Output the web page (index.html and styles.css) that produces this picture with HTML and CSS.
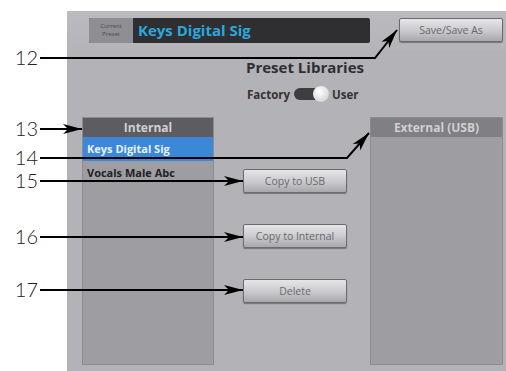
FILE: index.html
```html
<!DOCTYPE html>
<html lang="en">
<head>
  <meta charset="UTF-8">
  <title>Preset Libraries</title>
  <link rel="stylesheet" href="styles.css">
</head>
<body>
  <div class="panel">
    <div class="topbar">
      <div class="preset">
        <div class="preset-label">Current<br>Preset</div>
        <div class="preset-name">Keys Digital Sig</div>
      </div>
      <button class="btn save">Save/Save As</button>
    </div>

    <div class="libs-head">
      <h1>Preset Libraries</h1>
      <div class="switch-row">
        <span>Factory</span>
        <span class="toggle"><span class="knob"></span></span>
        <span>User</span>
      </div>
    </div>

    <div class="libs">
      <div class="list">
        <div class="list-head">Internal</div>
        <div class="item selected">Keys Digital Sig</div>
        <div class="item">Vocals Male Abc</div>
      </div>
      <div class="actions">
        <button class="btn">Copy to USB</button>
        <button class="btn">Copy to Internal</button>
        <button class="btn">Delete</button>
      </div>
      <div class="list">
        <div class="list-head ext">External (USB)</div>
      </div>
    </div>
  </div>

  <!-- callout lines -->
  <svg class="callouts" width="506" height="371" viewBox="0 0 506 371">
    <defs>
      <marker id="tip" markerUnits="userSpaceOnUse" markerWidth="20" markerHeight="12" refX="19" refY="6" orient="auto">
        <path d="M0,1 L19,6 L0,11 L5,6 z" fill="#000"/>
      </marker>
    </defs>
    <g class="lines">
      <polyline points="40,58 375,58 397,30" marker-end="url(#tip)"/>
      <polyline points="40,129 82,129" marker-end="url(#tip)"/>
      <polyline points="40,158 347,158 369,133" marker-end="url(#tip)"/>
      <polyline points="40,181 243,181" marker-end="url(#tip)"/>
      <polyline points="40,237 243,237" marker-end="url(#tip)"/>
      <polyline points="40,290 243,290" marker-end="url(#tip)"/>
    </g>
    <g class="nums">
      <text x="38" y="65">12</text>
      <text x="38" y="136">13</text>
      <text x="38" y="165">14</text>
      <text x="38" y="188">15</text>
      <text x="38" y="244">16</text>
      <text x="38" y="297">17</text>
    </g>
  </svg>
</body>
</html>
```

FILE: styles.css
```css
html, body { margin:0; padding:0; }
body { width:506px; height:371px; background:#fff; font-family:"Open Sans", "DejaVu Sans", sans-serif; overflow:hidden; position:relative; }

.panel { margin:11px 0 0 67px; height:360px; background:linear-gradient(#bbbabe, #b5b4b9 38px, #b3b2b7 40px, #b3b2b7); box-sizing:border-box; padding:7px 3px 0 22px; }

.topbar { display:flex; align-items:flex-start; }
.preset { display:flex; width:281px; height:25px; background:#2f2e31; border-radius:2px; overflow:hidden; }
.preset-label { width:44px; background:#8f8e93; color:#4a4a4e; font-size:6px; line-height:8px; text-align:center; padding-top:4px; box-sizing:border-box; }
.preset-name { color:#2aa8de; font-weight:700; font-size:15px; line-height:25px; padding-left:5px; }

.btn { display:block; width:104px; height:24px; padding:0; border:1px solid #6c6b70; border-radius:2px; background:linear-gradient(#e6e6e8, #c9c8cc 55%, #a9a8ad); color:#6a696e; font-family:"Open Sans", "DejaVu Sans", sans-serif; font-size:10.5px; box-shadow:0 1px 1px rgba(0,0,0,.35); }
.save { margin-left:auto; }

.libs-head { padding-left:152px; margin-top:14px; }
h1 { margin:0; width:128px; text-align:center; font-size:15px; font-weight:700; color:#2f2f33; line-height:20px; }
.switch-row { display:flex; align-items:center; gap:4px; height:16px; margin:9px 0 0 6px; font-size:11.5px; font-weight:700; color:#333; }
.toggle { position:relative; width:34px; height:12px; background:#3e3d41; border-radius:6px; }
.knob { position:absolute; right:-1px; top:-2px; width:16px; height:16px; border-radius:50%; background:radial-gradient(circle at 40% 35%, #fff, #d8d8da 70%, #a5a5a8); }

.libs { display:flex; margin:15px 0 0 -7px; }
.list { width:132px; height:248px; background:#9e9da2; border:1px solid #8c8b90; box-sizing:border-box; }
.list:last-child { width:133px; margin-left:auto; }
.list-head { height:19px; background:#5d5c60; color:#d0d0d2; font-size:12px; font-weight:700; text-align:center; line-height:19px; }
.list-head.ext { background:#807f84; }
.item { height:24px; line-height:24px; padding-left:4px; font-size:11px; font-weight:700; color:#222; }
.item.selected { background:#3b88d8; color:#e8f2ff; }

.actions { display:flex; flex-direction:column; gap:31px; padding:52px 0 0 29px; }

.callouts { position:absolute; left:0; top:0; pointer-events:none; }
.lines polyline { fill:none; stroke:#000; stroke-width:2; }
.nums text { font-family:Lato, "DejaVu Sans", sans-serif; font-weight:300; font-size:20px; fill:#222; text-anchor:end; }
```
